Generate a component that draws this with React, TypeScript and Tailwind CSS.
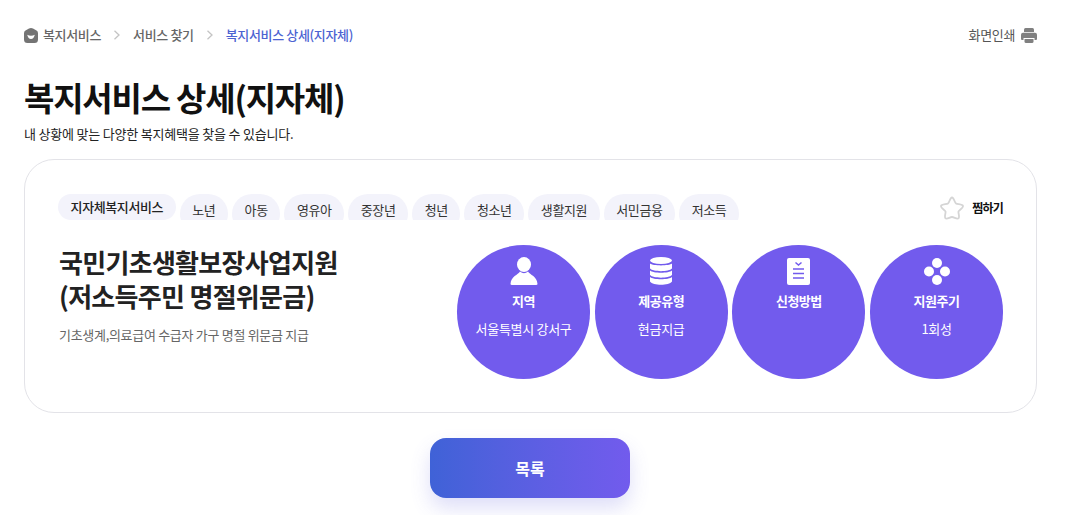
const tags = ["노년", "아동", "영유아", "중장년", "청년", "청소년", "생활지원", "서민금융", "저소득"];

function HomeIcon() {
  return (
    <svg viewBox="0 0 14 15" className="h-[15px] w-[14px]">
      <path d="M7 0Q8 0 9 .6L12.500 2.600Q14 3.500 14 5.200V11.500Q14 15 10.500 15H3.500Q0 15 0 11.500V5.200Q0 3.500 1.500 2.600L5 .6Q6 0 7 0Z" fill="#747474" />
      <path d="M3.200 6.800Q7 8.800 10.800 6.800Q9.800 11 7 11Q4.200 11 3.200 6.800Z" fill="#fff" />
    </svg>
  );
}

function Chevron() {
  return (
    <svg viewBox="0 0 8 10" className="h-[10px] w-[8px]" fill="none" stroke="#c4c4c4" strokeWidth="1.300">
      <path d="M1.500 .8 6 5 1.500 9.200" />
    </svg>
  );
}

function PrintIcon() {
  return (
    <svg viewBox="0 0 16 15" className="h-[15px] w-[16px]" fill="#808080">
      <path d="M3 1.500Q3 0 4.500 0H11.500Q13 0 13 1.500V4H3Z" />
      <path d="M2 4.800H14Q16 4.800 16 6.800V11Q16 12 15 12H13.500V10H2.500V12H1Q0 12 0 11V6.800Q0 4.800 2 4.800Z" />
      <path d="M3.500 11H12.500V13.500Q12.500 15 11 15H5Q3.500 15 3.500 13.500Z" />
    </svg>
  );
}

function UserIcon() {
  return (
    <svg viewBox="0 0 28 28" className="h-[28px] w-[28px]" fill="#fff">
      <ellipse cx="14" cy="7.500" rx="7" ry="7.500" />
      <path d="M10 14.500C8 18 1 19 .5 27Q.5 28 2 28H26Q27.500 28 27.500 27C27 19 20 18 18 14.500Q14 18 10 14.500Z" />
    </svg>
  );
}

function DbIcon() {
  return (
    <svg viewBox="0 0 22 28" className="h-[28px] w-[22px]" fill="#fff">
      <ellipse cx="11" cy="3.500" rx="11" ry="3.500" />
      <path d="M0 6.500C3 9 19 9 22 6.500V11.500C19 15 3 15 0 11.500Z" />
      <path d="M0 13.500C3 16.500 19 16.500 22 13.500V18C19 21.500 3 21.500 0 18Z" />
      <path d="M0 20C3 23 19 23 22 20V24.500C19 28.800 3 28.800 0 24.500Z" />
    </svg>
  );
}

function DocIcon() {
  return (
    <svg viewBox="0 0 23 27" className="h-[27px] w-[23px]">
      <rect width="23" height="27" rx="2" fill="#fff" />
      <path d="M8.500 4.500 11.500 7 14.500 4.500" fill="none" stroke="#725bed" strokeWidth="1.500" />
      <path d="M6 11H17M6 15.500H17M6 20H17" stroke="#725bed" strokeWidth="1.600" />
    </svg>
  );
}

function DotsIcon() {
  return (
    <svg viewBox="0 0 26 27" className="h-[27px] w-[26px]" fill="#fff">
      <circle cx="13" cy="5" r="5" />
      <circle cx="5" cy="13.500" r="5" />
      <circle cx="21" cy="13.500" r="5" />
      <circle cx="13" cy="22" r="5" />
    </svg>
  );
}

function Circle({ icon, title, value }: { icon: React.ReactNode; title: string; value?: string }) {
  return (
    <div className="flex h-[134px] w-[133px] flex-col items-center rounded-full bg-[#725bed] pt-[12px] text-white">
      <div className="flex h-[28px] items-center justify-center">{icon}</div>
      <div className="mt-[6px] text-[13px] leading-[20px] font-bold tracking-[-0.5px]">{title}</div>
      {value && <div className="mt-[8px] text-[13px] leading-[20px] tracking-[-0.3px]">{value}</div>}
    </div>
  );
}

export default function App() {
  return (
    <div className="h-[515px] w-[1075px] overflow-hidden bg-white px-[24px] pt-[25px] font-['Noto_Sans_CJK_KR','Noto_Sans',sans-serif]">
      <div className="mr-[14px] flex h-[20px] items-center justify-between text-[13px] tracking-[-0.35px]">
        <div className="flex items-center font-medium">
          <HomeIcon />
          <span className="ml-[5px] text-[#666]">복지서비스</span>
          <span className="mx-[12px]"><Chevron /></span>
          <span className="text-[#666]">서비스 찾기</span>
          <span className="mx-[12px]"><Chevron /></span>
          <span className="text-[#4c63d2]">복지서비스 상세(지자체)</span>
        </div>
        <div className="flex items-center gap-[6px] text-[#555]">
          화면인쇄
          <PrintIcon />
        </div>
      </div>

      <h1 className="mt-[28px] text-[33px] leading-[48px] font-bold tracking-[-1.2px] text-[#111]">복지서비스 상세(지자체)</h1>
      <p className="mt-[3px] text-[13px] leading-[20px] tracking-[-0.2px] text-[#222]">내 상황에 맞는 다양한 복지혜택을 찾을 수 있습니다.</p>

      <div className="mt-[15px] mr-[14px] h-[254px] rounded-[30px] border border-[#e3e3e8] px-[33px] pt-[34px]">
        <div className="flex items-start justify-between">
          <div className="flex h-[26px] gap-[4px] overflow-hidden text-[13px] tracking-[-0.4px] text-[#333]">
            <span className="h-[26px] rounded-full bg-[#f3f3fb] px-[12.600px] leading-[25px] font-medium text-[#222]">지자체복지서비스</span>
            {tags.map((tag) => (
              <span key={tag} className="h-[40px] rounded-full bg-[#f3f3fb] px-[12.600px] pt-[6px] leading-[20px]">{tag}</span>
            ))}
          </div>
          <div className="mt-[2px] flex items-center gap-[8px] text-[12px] font-bold tracking-[-0.8px] text-[#111]">
            <svg viewBox="0 0 24 24" className="h-[24px] w-[24px]" fill="none" stroke="#d5d5d5" strokeWidth="1.800" strokeLinejoin="round">
              <path d="M12 1.500C14 1.500 14.500 6.500 16 7.500C17.500 8.500 22.500 8 23 10C23.500 12 19 14 18.500 15.500C18 17 20 21 18.500 22.300C17 23.500 14 21 12 21C10 21 7 23.500 5.500 22.300C4 21 6 17 5.500 15.500C5 14 .5 12 1 10C1.500 8 6.500 8.500 8 7.500C9.500 6.500 10 1.500 12 1.500Z" />
            </svg>
            찜하기
          </div>
        </div>

        <div className="mt-[25px] flex items-start justify-between">
          <div className="pl-[1px]">
            <h2 className="text-[26px] leading-[34px] font-bold tracking-[-0.7px] text-[#222]">
              국민기초생활보장사업지원
              <br />
              (저소득주민 명절위문금)
            </h2>
            <p className="mt-[12px] text-[13px] leading-[20px] tracking-[-0.3px] text-[#666]">기초생계,의료급여 수급자 가구 명절 위문금 지급</p>
          </div>
          <div className="flex gap-[4.670px]">
            <Circle icon={<UserIcon />} title="지역" value="서울특별시 강서구" />
            <Circle icon={<DbIcon />} title="제공유형" value="현금지급" />
            <Circle icon={<DocIcon />} title="신청방법" />
            <Circle icon={<DotsIcon />} title="지원주기" value="1회성" />
          </div>
        </div>
      </div>

      <div className="mt-[25px] mr-[15px] flex justify-center">
        <button className="h-[60px] w-[200px] rounded-[16px] bg-gradient-to-r from-[#3f62d7] to-[#725bed] text-[16px] font-bold text-white shadow-[0_10px_20px_rgba(90,90,220,0.2)]">목록</button>
      </div>
    </div>
  );
}
